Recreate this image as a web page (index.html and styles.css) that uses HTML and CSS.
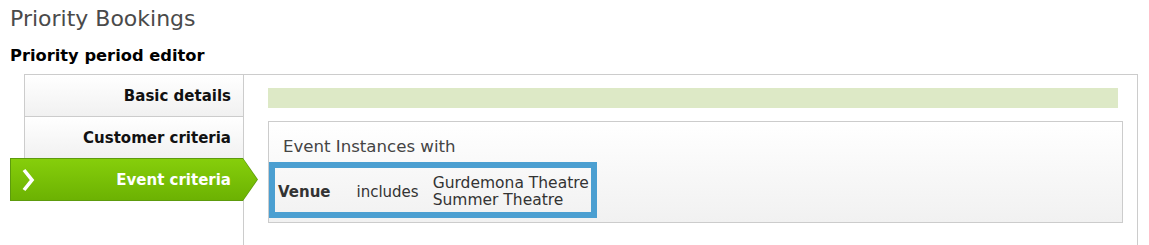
FILE: index.html
```html
<!DOCTYPE html>
<html>
<head>
<meta charset="utf-8">
<link rel="stylesheet" href="styles.css">
</head>
<body>
<h1 class="title">Priority Bookings</h1>
<h2 class="subtitle">Priority period editor</h2>
<div class="editor">
  <ul class="nav">
    <li class="tab">Basic details</li>
    <li class="tab">Customer criteria</li>
    <li class="tab tab-active">
      <svg class="chev" width="14" height="24" viewBox="0 0 14 24"><polyline points="3,2 11,12 3,22" fill="none" stroke="#fff" stroke-width="3.6" stroke-linejoin="miter"/></svg>
      <span class="tab-label">Event criteria</span>
    </li>
  </ul>
  <div class="panel">
    <div class="status-bar"></div>
    <div class="criteria-box">
      <div class="criteria-heading">Event Instances with</div>
      <table class="rule">
        <tr>
          <td class="rule-field">Venue</td>
          <td class="rule-op">includes</td>
          <td class="rule-values">Gurdemona Theatre<br>Summer Theatre</td>
        </tr>
      </table>
    </div>
  </div>
</div>
</body>
</html>
```
FILE: styles.css
```css
html, body {
  margin: 0;
  padding: 0;
  background: #fff;
}
body {
  font-family: "DejaVu Sans", Verdana, sans-serif;
  padding: 0 10px;
  overflow: hidden;
  height: 245px;
  box-sizing: border-box;
}
.title {
  margin: 0;
  padding-top: 5px;
  font-size: 22px;
  font-weight: normal;
  color: #4a4a4a;
  line-height: 28px;
}
.subtitle {
  margin: 0;
  padding-top: 13px;
  font-size: 16.3px;
  font-weight: bold;
  color: #000;
  line-height: 19px;
}
.editor {
  display: flex;
  margin-top: 9px;
  padding-left: 14px;
  height: 171px;
}
.nav {
  list-style: none;
  margin: 0;
  padding: 0;
  width: 219px;
  flex: none;
}
.tab {
  height: 42px;
  box-sizing: border-box;
  border: 1px solid #cccccc;
  border-right: none;
  border-bottom: none;
  background: linear-gradient(#ffffff, #f1f1f1);
  font-size: 15px;
  font-weight: bold;
  color: #111;
  text-align: right;
  padding-right: 12px;
  line-height: 42px;
}
.tab-active {
  position: relative;
  margin-left: -14px;
  width: 248px;
  height: 43px;
  border: none;
  background: #5d9b0d;
  clip-path: polygon(0 0, 233px 0, 248px 50%, 233px 100%, 0 100%);
  color: #fff;
  padding-right: 0;
  display: flex;
  align-items: center;
  z-index: 2;
}
.tab-active::before {
  content: "";
  position: absolute;
  inset: 1px;
  background: linear-gradient(#86ce0b, #6cb202);
  clip-path: polygon(0 0, 232px 0, 246px 50%, 232px 100%, 0 100%);
}
.chev {
  position: relative;
  margin-left: 11px;
  flex: none;
}
.tab-label {
  position: relative;
  margin-left: auto;
  margin-right: 27px;
  line-height: 20px;
}
.panel {
  flex: 1;
  border: 1px solid #cccccc;
  border-bottom: none;
  padding: 13px 14px 0 24px;
  margin-right: 1px;
}
.status-bar {
  height: 20px;
  background: #dde9c6;
  margin-right: 5px;
}
.criteria-box {
  margin-top: 13px;
  height: 102px;
  box-sizing: border-box;
  border: 1px solid #cccccc;
  background: linear-gradient(#ffffff, #f1f1f1);
  padding: 14px 0 0 0;
}
.criteria-heading {
  font-size: 16.6px;
  color: #444;
  padding-left: 14px;
  line-height: 21px;
}
.rule {
  margin-top: 5px;
  border: 6px solid #4b9fd1;
  border-collapse: collapse;
  font-size: 15px;
  color: #333;
}
.rule td {
  padding: 7px 0 3px;
  line-height: 17px;
  vertical-align: middle;
}
.rule-field {
  font-weight: bold;
  padding-left: 3px !important;
  padding-right: 26px !important;
}
.rule-op {
  padding-right: 14px !important;
}
.rule-values {
  font-size: 15.5px;
  padding-right: 2px !important;
}
```
